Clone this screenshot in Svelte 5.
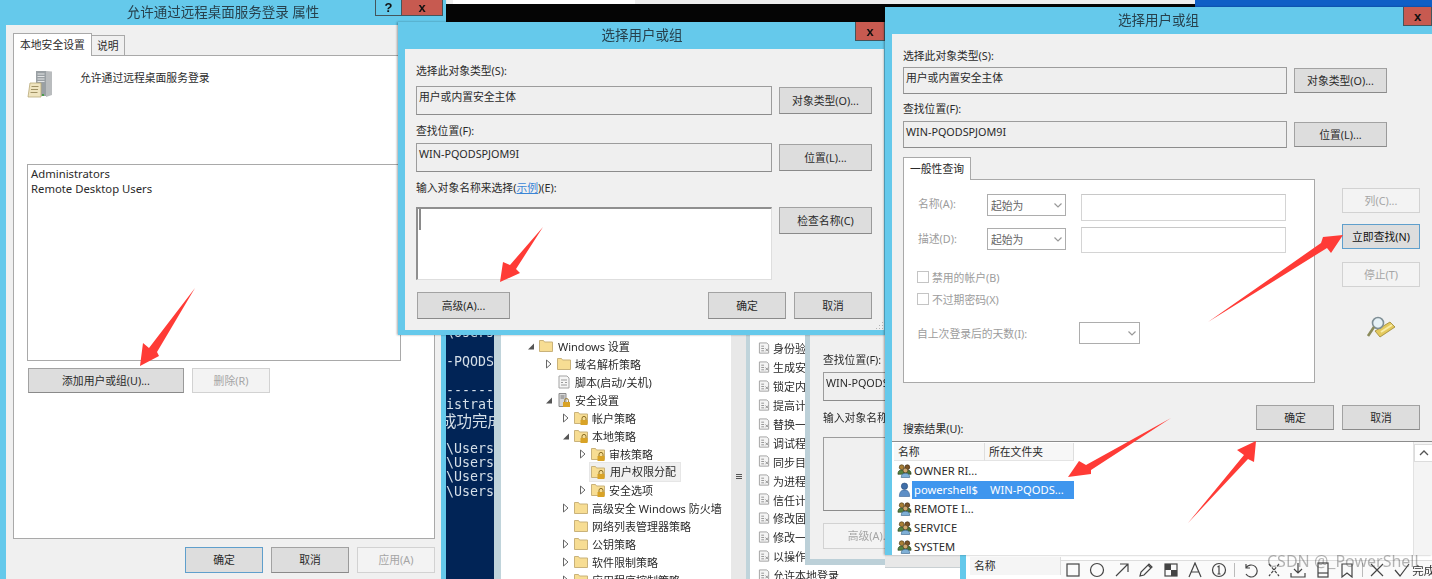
<script>
  const tree = [
    { level: 0, arrow: 'open', icon: 'folder', text: 'Windows 设置' },
    { level: 1, arrow: 'closed', icon: 'folder', text: '域名解析策略' },
    { level: 1, icon: 'script', text: '脚本(启动/关机)' },
    { level: 1, arrow: 'open', icon: 'server', text: '安全设置' },
    { level: 2, arrow: 'closed', icon: 'lock', text: '帐户策略' },
    { level: 2, arrow: 'open', icon: 'lock', text: '本地策略' },
    { level: 3, arrow: 'closed', icon: 'lock', text: '审核策略' },
    { level: 3, icon: 'lock', text: '用户权限分配', selected: true },
    { level: 3, arrow: 'closed', icon: 'lock', text: '安全选项' },
    { level: 2, arrow: 'closed', icon: 'folder', text: '高级安全 Windows 防火墙' },
    { level: 2, icon: 'folder', text: '网络列表管理器策略' },
    { level: 2, arrow: 'closed', icon: 'folder', text: '公钥策略' },
    { level: 2, arrow: 'closed', icon: 'folder', text: '软件限制策略' },
    { level: 2, arrow: 'closed', icon: 'folder', text: '应用程序控制策略' }
  ];

  const policies = [
    '身份验证后模拟客户端', '生成安全审核', '锁定内存页', '提高计划优先级', '替换一个进程级令牌',
    '调试程序', '同步目录服务数据', '为进程调整内存配额', '信任计算机和用户帐户',
    '修改固件环境值', '修改一个对象标签', '以操作系统方式执行', '允许本地登录'
  ];

  const results = [
    { name: 'OWNER RI...', folder: '', icon: 'group' },
    { name: 'powershell$', folder: 'WIN-PQODS...', icon: 'user', selected: true },
    { name: 'REMOTE I...', folder: '', icon: 'group' },
    { name: 'SERVICE', folder: '', icon: 'group' },
    { name: 'SYSTEM', folder: '', icon: 'group' }
  ];

  const consoleLines = [
    '\\Users', '', '-PQODS', '', '--------', 'istrat', '成功完成', '',
    '\\Users', '\\Users', '\\Users', '\\Users'
  ];

  const arrows = [
    '195,288 157,352 159,356 140,366 143,343 149,348',
    '543,227 516,269 520,273 500,282 503,262 510,265',
    '1208,322 1321,243 1323,237 1343,235 1331,253 1327,248',
    '1171,418 1086,465 1079,461 1068,477 1091,474 1091,470',
    '1188,523 1244,455 1237,450 1256,441 1254,462 1248,459'
  ];
</script>

{#snippet pick(type, locName)}
  <div class="plabel">选择此对象类型(S):</div>
  <div class="prow">
    <div class="field">{type}</div>
    <button class="btn side">对象类型(O)...</button>
  </div>
  <div class="plabel second">查找位置(F):</div>
  <div class="prow">
    <div class="field">{locName}</div>
    <button class="btn side">位置(L)...</button>
  </div>
{/snippet}

{#snippet chevron()}
  <svg viewBox="0 0 8 5" width="8" height="5"><path d="M.5.5l3.500 3.500 3.500-3.500" fill="none" stroke="#999" stroke-width="1.200"/></svg>
{/snippet}

{#snippet treeIcon(kind)}
  {#if kind === 'script'}
    <svg class="ticon" viewBox="0 0 14 14"><path d="M2 1h8l2 2v10H2z" fill="#f6f6f6" stroke="#a3a3a3"/><path d="M4 5h6M4 7.500h2M8 7.500h2M4 10h6" stroke="#9a9a9a"/></svg>
  {:else if kind === 'server'}
    <svg class="ticon" viewBox="0 0 14 14"><path d="M2 0.500h7v13H2z" fill="#d8d8d8" stroke="#8b8b8b"/><path d="M3.500 3h4M3.500 5h4" stroke="#777"/><path d="M6 9h7v5H6z" fill="#d9a326"/><path d="M7.600 9V7.400a1.900 1.900 0 0 1 3.800 0V9" fill="none" stroke="#9a7a2c"/></svg>
  {:else}
    <svg class="ticon" viewBox="0 0 14 14"><path d="M0.500 12.500V1.500h4l1 1.500h8v9.500z" fill="#f7dd93" stroke="#c9b27a"/>
      {#if kind === 'lock'}
        <path d="M6.500 9h7v5h-7z" fill="#d9a326"/><path d="M8 9V7.400a2 2 0 0 1 4 0V9" fill="none" stroke="#8a6d24"/>
      {/if}
    </svg>
  {/if}
{/snippet}

{#snippet userIcon(kind)}
  <svg class="uicon" viewBox="0 0 16 16">
    {#if kind === 'group'}
      <circle cx="5" cy="4.500" r="2.600" fill="#a97f35" stroke="#4c3c1a" stroke-width=".7"/>
      <path d="M1 12c0-3.500 1.500-4.500 4-4.500S9 8.500 9 12z" fill="#55803f" stroke="#2c4620" stroke-width=".7"/>
      <circle cx="11" cy="4.500" r="2.600" fill="#7a5226" stroke="#3c2a12" stroke-width=".7"/>
      <path d="M7 12c0-3.500 1.500-4.500 4-4.500s4 1 4 4.500z" fill="#4a7236" stroke="#263c1a" stroke-width=".7"/>
      <circle cx="9" cy="8" r="2.500" fill="#d2a970" stroke="#5c4426" stroke-width=".7"/>
      <path d="M4.500 15.500c0-3.500 1.800-4.500 4.500-4.500s4.500 1 4.500 4.500z" fill="#7fb0d6" stroke="#3f6a90" stroke-width=".7"/>
    {:else}
      <circle cx="8" cy="4.500" r="3.400" fill="#3f6ea8" stroke="#274a78" stroke-width=".6"/>
      <path d="M2.500 15.500c0-5 2.200-7 5.500-7s5.500 2 5.500 7z" fill="#5e8fc6" stroke="#2f5a8c" stroke-width=".6"/>
    {/if}
  </svg>
{/snippet}

<div class="desktop">
  <div class="top-strip">
    <div class="strip-light"></div>
    <div class="strip-black"></div>
  </div>
  <div class="wallpaper"></div>

  <div class="back-app">
    <div class="terminal">
      {#each consoleLines as line}
        <div class="cline" class:cjk={line.startsWith('成')}>{line}</div>
      {/each}
    </div>
    <div class="gutter"></div>
    <div class="tree">
      {#each tree as node}
        <div class="tnode lvl{node.level}">
          <span class="twist">
            {#if node.arrow === 'closed'}
              <svg viewBox="0 0 8 10" width="8" height="10"><path d="M1.500 1l4.500 4-4.500 4z" fill="#fff" stroke="#666"/></svg>
            {:else if node.arrow === 'open'}
              <svg viewBox="0 0 8 10" width="8" height="10"><path d="M7 2.500v6H1z" fill="#555"/></svg>
            {/if}
          </span>
          {@render treeIcon(node.icon)}
          <span class="tlabel" class:selected={node.selected}>{node.text}</span>
        </div>
      {/each}
    </div>
    <div class="splitter"><span></span><span></span><span></span></div>
    <div class="gutter thin"></div>
    <div class="policies">
      {#each policies as p}
        <div class="policy">
          <svg class="picon" viewBox="0 0 14 14"><path d="M1.500 1h8l2 2v9h-10z" fill="#f4f4f4" stroke="#a0a0a0"/><path d="M3.500 4.500h3M3.500 7h3M3.500 9.500h3M8 7l3 3M11 7l-3 3" stroke="#8f8f8f"/></svg>
          <span>{p}</span>
        </div>
      {/each}
    </div>
  </div>

  <div class="behind-win">
    <div class="behind-body">
      <div class="plabel">查找位置(F):</div>
      <div class="field bf">WIN-PQODSPJOM9I</div>
      <div class="plabel b2">输入对象名称来选择(示例)(E):</div>
      <div class="field bt"></div>
      <button class="btn off badv">高级(A)...</button>
    </div>
  </div>

  <!-- 属性窗口 -->
  <div class="win w1">
    <div class="titlebar">
      <span class="title">允许通过远程桌面服务登录 属性</span>
      <div class="caps">
        <span class="cap help">?</span>
        <span class="cap close wide">x</span>
      </div>
    </div>
    <div class="body w1-body">
      <div class="tabs">
        <div class="tab active">本地安全设置</div>
        <div class="tab">说明</div>
      </div>
      <div class="panel w1-panel">
        <div class="w1-head">
          <svg class="server" viewBox="0 0 26 28">
            <path d="M9 1h10v25H9z" fill="#9aa0a4"/>
            <path d="M10.500 4h7M10.500 6.500h7M10.500 9h7M10.500 11.500h7" stroke="#e3e5e6" stroke-width="1.200"/>
            <path d="M19 1l6 .5V25l-6 2z" fill="#b9bcbe"/>
            <path d="M3 13h11v14H1z" fill="#efe4bf" stroke="#b9aa7a" stroke-width=".8"/>
            <path d="M4.500 16.500h7M4 19.500h7M3.500 22.500h7" stroke="#a09265"/>
            <rect x="15" y="24" width="2" height="2" fill="#4a9b4a"/>
          </svg>
          <span>允许通过远程桌面服务登录</span>
        </div>
        <div class="members">
          <div>Administrators</div>
          <div>Remote Desktop Users</div>
        </div>
        <div class="member-actions">
          <button class="btn add">添加用户或组(U)...</button>
          <button class="btn off w78">删除(R)</button>
        </div>
      </div>
      <div class="w1-foot">
        <button class="btn w78 default">确定</button>
        <button class="btn w78">取消</button>
        <button class="btn off w78">应用(A)</button>
      </div>
    </div>
  </div>

  <!-- 选择用户或组 -->
  <div class="win w2">
    <div class="titlebar">
      <span class="title">选择用户或组</span>
      <div class="caps"><span class="cap close">x</span></div>
    </div>
    <div class="body w2-body">
      <div class="pick">
        {@render pick('用户或内置安全主体', 'WIN-PQODSPJOM9I')}
      </div>
      <div class="plabel third">输入对象名称来选择(<span class="link">示例</span>)(E):</div>
      <div class="entry-row">
        <div class="entry"><i></i></div>
        <button class="btn side">检查名称(C)</button>
      </div>
      <div class="w2-foot">
        <button class="btn side">高级(A)...</button>
        <div class="spacer"></div>
        <button class="btn w78">确定</button>
        <button class="btn w78">取消</button>
      </div>
      <svg class="grip" viewBox="0 0 10 10"><path d="M8 2h1v1H8zM5 5h1v1H5zM8 5h1v1H8zM2 8h1v1H2zM5 8h1v1H5zM8 8h1v1H8z" fill="#b5b5b5"/></svg>
    </div>
  </div>

  <div class="under-bar"></div>
  <div class="win-under">
    <div class="under-head">名称</div>
  </div>

  <!-- 选择用户或组(高级) -->
  <div class="win w3">
    <div class="titlebar">
      <span class="title">选择用户或组</span>
      <div class="caps"><span class="cap close">x</span></div>
    </div>
    <div class="body w3-body">
      <div class="pick tight">
        {@render pick('用户或内置安全主体', 'WIN-PQODSPJOM9I')}
      </div>
      <div class="query">
        <div class="query-left">
          <div class="tabs q-tabs"><div class="tab active q-tab">一般性查询</div></div>
          <div class="panel q-panel">
            <div class="q-grid">
              <span class="dim">名称(A):</span>
              <div class="select"><span>起始为</span>{@render chevron()}</div>
              <span></span>
              <div class="input"></div>
              <span class="dim low">描述(D):</span>
              <div class="select one"><span>起始为</span>{@render chevron()}</div>
              <span></span>
              <div class="input"></div>
            </div>
            <div class="checks">
              <div class="check"><i></i><span>禁用的帐户(B)</span></div>
              <div class="check"><i></i><span>不过期密码(X)</span></div>
            </div>
            <div class="days">
              <span class="dim">自上次登录后的天数(I):</span>
              <div class="select small"><span></span>{@render chevron()}</div>
            </div>
          </div>
        </div>
        <div class="query-right">
          <button class="btn off w78">列(C)...</button>
          <button class="btn w78 default now">立即查找(N)</button>
          <button class="btn off w78 stop">停止(T)</button>
          <svg class="finder" viewBox="0 0 30 22">
            <path d="M9 15l15-9 5 5-15 10z" fill="#e4c95e" stroke="#9c8634" stroke-width=".8"/>
            <path d="M15 16l11-7" stroke="#f8eca8" stroke-width="2"/>
            <circle cx="12" cy="7" r="5.500" fill="#e6f1f6" stroke="#7f8f96" stroke-width="1.600"/>
            <path d="M8 11L2 20" stroke="#8a8a5a" stroke-width="2.600"/>
          </svg>
        </div>
      </div>
      <div class="w3-foot">
        <span class="result-label">搜索结果(U):</span>
        <div class="spacer"></div>
        <button class="btn w78">确定</button>
        <button class="btn w78">取消</button>
      </div>
      <div class="results">
        <div class="results-main">
          <div class="rhead"><span class="c1">名称</span><span class="c2">所在文件夹</span></div>
          {#each results as r}
            <div class="rrow">
              {@render userIcon(r.icon)}
              <div class="rcells" class:selected={r.selected}>
                <span class="rname">{r.name}</span>
                {#if r.folder}<span class="rfolder">{r.folder}</span>{/if}
              </div>
            </div>
          {/each}
        </div>
        <div class="scroll">
          <div class="sbtn"><svg viewBox="0 0 10 6" width="10" height="6"><path d="M1 5l4-4 4 4" fill="none" stroke="#555" stroke-width="1.300"/></svg></div>
        </div>
      </div>
    </div>
  </div>

  <div class="toolbar">
    <svg viewBox="0 0 16 16"><rect x="2" y="2" width="12" height="12"/></svg>
    <svg viewBox="0 0 16 16"><circle cx="8" cy="8" r="6.500"/></svg>
    <svg viewBox="0 0 16 16"><path d="M2 14L14 2M6 2h8v8"/></svg>
    <svg viewBox="0 0 16 16"><path d="M2 14l1-4 8-8 3 3-8 8zM10 3l3 3"/></svg>
    <svg viewBox="0 0 16 16"><rect x="2" y="2" width="12" height="12"/><path class="solid" d="M2 2h6v6H2zM8 8h6v6H8z"/></svg>
    <svg viewBox="0 0 16 16"><path d="M2 15L8 1l6 14M4.500 10h7"/></svg>
    <svg viewBox="0 0 16 16"><circle cx="8" cy="8" r="6.500"/><path d="M6.500 5L8 4v8M6.500 12h3"/></svg>
    <i class="tsep"></i>
    <svg viewBox="0 0 16 16"><path d="M4 2v4h4M4 6a6 6 0 1 1 0 6"/></svg>
    <svg viewBox="0 0 16 16"><path d="M3 2l10 12M13 2L3 14" stroke-dasharray="3 1.500"/></svg>
    <svg viewBox="0 0 16 16"><path d="M8 1v10M4 7l4 4 4-4M1 11v4h14v-4"/></svg>
    <svg viewBox="0 0 16 16"><rect x="3" y="1" width="10" height="14"/><path d="M3 11h10"/></svg>
    <svg viewBox="0 0 16 16"><path d="M3 2h10v13l-5-4-5 4z"/></svg>
    <i class="tsep"></i>
    <svg viewBox="0 0 16 16"><path d="M2 2l12 12M14 2L2 14"/></svg>
    <svg viewBox="0 0 16 16"><path d="M1 8l5 6L15 2"/></svg>
    <span class="done">完成</span>
  </div>
  <span class="watermark">CSDN @_PowerShell</span>

  <svg class="arrows" viewBox="0 0 1432 579">
    {#each arrows as a}
      <polygon points={a} />
    {/each}
  </svg>
</div>

<style>
  :global(body) {
    margin: 0;
    background: #fff;
  }

  .desktop {
    position: relative;
    width: 1432px;
    height: 579px;
    overflow: hidden;
    font-family: "Noto Sans", "Noto Sans CJK SC", sans-serif;
    font-size: 10.8px;
    color: #2a2a2a;
    filter: blur(0.5px);
  }

  .top-strip {
    position: absolute;
    left: 446px;
    top: 0;
    width: 750px;
  }
  .strip-light {
    height: 4px;
    background: linear-gradient(to right, #eee 7px, #fff 7px, #fff 189px, #eee 189px);
  }
  .strip-black {
    height: 20px;
    background: #050505;
  }
  .wallpaper {
    position: absolute;
    left: 1195px;
    top: 0;
    width: 237px;
    height: 8px;
    background: #0f5fc6;
  }

  /* window chrome */
  .win {
    position: absolute;
    box-sizing: border-box;
    display: flex;
    flex-direction: column;
    background: #65c9eb;
    box-shadow: -1px 0 2px rgba(0, 0, 0, 0.35);
  }
  .titlebar {
    position: relative;
    flex: none;
    display: flex;
    justify-content: center;
    align-items: center;
  }
  .title {
    margin-bottom: 4px;
    font-size: 13.5px;
    color: #27414d;
  }
  .caps {
    position: absolute;
    top: 0;
    right: 0;
    display: flex;
  }
  .cap {
    box-sizing: border-box;
    display: flex;
    align-items: center;
    justify-content: center;
    height: 19px;
    width: 30px;
    border: 1px solid #44555c;
    border-top: none;
    font: bold 13px/1 "Liberation Sans", sans-serif;
    color: #111;
  }
  .close {
    background: #c75a50;
  }
  .help {
    width: 26px;
    height: 16px;
    border-right: none;
  }
  .cap.wide {
    width: 42px;
    height: 16px;
  }
  .body {
    flex: 1;
    min-height: 0;
    background: #f0f0f0;
    box-sizing: border-box;
  }

  /* buttons */
  .btn {
    box-sizing: border-box;
    display: flex;
    align-items: center;
    justify-content: center;
    height: 26px;
    padding: 0 0 2px;
    flex: none;
    border: 1px solid #a2a2a2;
    border-bottom-color: #8a8a8a;
    border-right-color: #9a9a9a;
    border-radius: 0;
    background: #dddddd;
    font: inherit;
    color: #2a2a2a;
  }
  .btn.off {
    background: #f3f3f3;
    border-color: #d2d2d2;
    color: #a5a5a5;
  }
  .btn.default {
    border-color: #5f9fcc;
  }
  .w78 {
    width: 78px;
  }
  .side {
    width: 93px;
  }
  .spacer {
    flex: 1;
  }

  /* tabs and panels */
  .tabs {
    display: flex;
    height: 22px;
    align-items: flex-start;
  }
  .tab {
    box-sizing: border-box;
    height: 20px;
    margin-top: 2px;
    padding: 0 5px;
    line-height: 19px;
    background: #f0f0f0;
    border: 1px solid #a9a9a9;
    border-bottom: none;
    border-left: none;
  }
  .tab.active {
    position: relative;
    z-index: 1;
    height: 23px;
    margin-top: 0;
    padding: 0 6px;
    width: 79px;
    line-height: 22px;
    background: #fff;
    border-left: 1px solid #a9a9a9;
  }
  .panel {
    box-sizing: border-box;
    background: #fff;
    border: 1px solid #a9a9a9;
  }

  /* property window */
  .w1 {
    left: 0;
    top: 0;
    width: 446px;
    height: 600px;
    padding: 0 5px 0 6px;
  }
  .w1 .titlebar {
    height: 25px;
    margin: 0 -5px 0 -6px;
  }
  .w1 .caps {
    right: 3px;
  }
  .w1-body {
    padding: 8px 0 0 7px;
  }
  .w1-panel {
    width: 422px;
    height: 484px;
    padding-left: 13px;
  }
  .w1-head {
    display: flex;
    align-items: flex-start;
    height: 108px;
    padding-top: 14px;
    box-sizing: border-box;
  }
  .w1-head span {
    margin-left: 27px;
    line-height: 16px;
  }
  .server {
    width: 26px;
    height: 28px;
  }
  .members {
    box-sizing: border-box;
    width: 374px;
    height: 197px;
    padding: 1px 3px;
    border: 1px solid #a9a9a9;
    font-size: 11.3px;
    line-height: 15px;
  }
  .member-actions {
    display: flex;
    gap: 8px;
    margin: 7px 0 0 1px;
  }
  .add {
    width: 156px;
    height: 25px;
  }
  .member-actions .off {
    height: 25px;
  }
  .w1-foot {
    display: flex;
    justify-content: flex-end;
    gap: 8px;
    width: 422px;
    margin-top: 8px;
  }

  /* shared pick rows */
  .plabel {
    height: 16px;
    line-height: 16px;
    white-space: nowrap;
  }
  .prow {
    display: flex;
    align-items: center;
    gap: 7px;
    height: 29px;
    margin-top: 7px;
  }
  .plabel.second {
    margin-top: 8px;
  }
  .plabel.second + .prow {
    margin-top: 4px;
  }
  .field {
    flex: 1;
    box-sizing: border-box;
    height: 100%;
    padding: 0 2px;
    line-height: 19px;
    border: 1px solid #9c9c9c;
    border-bottom-color: #8c8c8c;
    background: #efefef;
    white-space: nowrap;
  }
  .prow .btn {
    height: 27px;
  }

  /* dialog 2 */
  .w2 {
    left: 398px;
    top: 22px;
    width: 488px;
    height: 313px;
    padding: 0 2px 5px 7px;
  }
  .w2 .titlebar {
    height: 27px;
    margin-left: -7px;
    margin-right: -2px;
  }
  .w2 .caps {
    right: 1px;
  }
  .w2-body {
    position: relative;
    padding: 14px 0 0 11px;
  }
  .pick {
    width: 456px;
  }
  .third {
    margin-top: 8px;
  }
  .link {
    color: #3a85d6;
    text-decoration: underline;
  }
  .entry-row {
    display: flex;
    align-items: flex-start;
    gap: 7px;
    width: 456px;
    margin-top: 11px;
  }
  .entry {
    position: relative;
    box-sizing: border-box;
    flex: 1;
    height: 73px;
    background: #fff;
    border: 1px solid #dedede;
    border-top: 2px solid #8f8f8f;
    border-left: 2px solid #8f8f8f;
  }
  .entry i {
    display: block;
    width: 2px;
    height: 21px;
    margin-left: 1px;
    background: #8a8a8a;
  }
  .entry-row .btn {
    height: 27px;
  }
  .w2-foot {
    display: flex;
    gap: 8px;
    width: 455px;
    margin: 12px 0 0 1px;
  }
  .w2-foot .btn {
    height: 27px;
  }
  .grip {
    position: absolute;
    right: 0;
    bottom: 0;
    width: 10px;
    height: 10px;
  }

  /* terminal + mmc behind */
  .back-app {
    position: absolute;
    left: 446px;
    top: 335px;
    width: 440px;
    height: 244px;
    display: flex;
    overflow: hidden;
  }
  .terminal {
    flex: none;
    width: 48px;
    margin-top: -9px;
    overflow: hidden;
    background: #012456;
    color: #d5dfe8;
    font-family: "DejaVu Sans Mono", monospace;
    font-size: 13.3px;
  }
  .cline {
    height: 14.45px;
    line-height: 14.45px;
    white-space: pre;
  }
  .cline.cjk {
    margin-left: -5px;
    font-family: "Noto Sans CJK SC", sans-serif;
    font-size: 15.5px;
  }
  .gutter {
    flex: none;
    width: 7px;
    background: #c0d4db;
  }
  .gutter.thin {
    width: 4px;
  }
  .tree {
    flex: none;
    width: 230px;
    box-sizing: border-box;
    padding-top: 2px;
    background: #fff;
  }
  .tnode {
    display: flex;
    align-items: center;
    height: 18px;
    white-space: nowrap;
  }
  .lvl0 { padding-left: 25px; }
  .lvl1 { padding-left: 43px; }
  .lvl2 { padding-left: 60px; }
  .lvl3 { padding-left: 77px; }
  .twist {
    flex: none;
    display: flex;
    width: 9px;
    margin-right: 4px;
    justify-content: center;
  }
  .ticon {
    position: relative;
    z-index: 1;
    flex: none;
    width: 14px;
    height: 14px;
  }
  .tlabel {
    padding: 0 4px;
    line-height: 17px;
    font-size: 11px;
  }
  .lvl0 .tlabel { margin-left: 1px; }
  .tlabel.selected {
    box-sizing: border-box;
    height: 20px;
    line-height: 18px;
    background: #f0f0f0;
    border: 1px solid #e6e6e6;
    margin-left: -16px;
    padding-left: 20px;
  }
  .splitter {
    flex: none;
    width: 15px;
    background: #e8e8e8;
    display: flex;
    flex-direction: column;
    align-items: center;
    justify-content: center;
    gap: 1px;
    box-sizing: border-box;
    padding-top: 38px;
  }
  .splitter span {
    width: 6px;
    height: 1px;
    background: #555;
  }
  .policies {
    flex: 1;
    background: #fff;
    padding-top: 4px;
    box-sizing: border-box;
  }
  .policy {
    display: flex;
    align-items: center;
    gap: 2px;
    height: 18.9px;
    padding-left: 8px;
    white-space: nowrap;
    font-size: 11px;
  }
  .picon {
    flex: none;
    width: 13px;
    height: 13px;
  }

  .behind-win {
    position: absolute;
    left: 805px;
    top: 335px;
    width: 81px;
    height: 230px;
    box-sizing: border-box;
    background: #bcd0d8;
    padding: 0 0 6px 5px;
  }
  .behind-body {
    height: 100%;
    box-sizing: border-box;
    overflow: hidden;
    background: #f0f0f0;
    padding: 17px 0 0 13px;
    width: 76px;
  }
  .field.bf {
    flex: none;
    width: 200px;
    height: 29px;
    margin-top: 4px;
  }
  .plabel.b2 {
    margin-top: 9px;
  }
  .field.bt {
    flex: none;
    width: 200px;
    height: 74px;
    margin-top: 11px;
    background: #f0f0f0;
    border-right: none;
  }
  .badv {
    width: 93px;
    height: 26px;
    margin-top: 12px;
  }

  /* dialog 3 */
  .w3 {
    left: 885px;
    top: 7px;
    width: 547px;
    height: 548px;
    padding: 0 0 0 7px;
  }
  .w3 .titlebar {
    height: 27px;
    margin-left: -7px;
  }
  .w3 .caps .cap {
    width: 29px;
  }
  .w3-body {
    padding: 14px 0 0 11px;
    display: flex;
    flex-direction: column;
    overflow: hidden;
  }
  .pick.tight {
    width: 484px;
  }
  .pick.tight :global(.prow) {
    height: 27px;
    margin-top: 3px;
  }
  .pick.tight .plabel.second {
    margin-top: 7px;
  }
  .pick.tight :global(.plabel.second + .prow) {
    margin-top: 4px;
  }
  .pick.tight :global(.prow .btn) {
    height: 25px;
  }
  .query {
    display: flex;
    gap: 27px;
    margin-top: 9px;
  }
  .query-left {
    width: 412px;
  }
  .q-tabs {
    height: 22px;
  }
  .q-tab.active {
    width: 68px;
    padding: 0 6px;
    white-space: nowrap;
  }
  .q-panel {
    height: 204px;
    padding: 14px 0 0 14px;
  }
  .q-grid {
    display: grid;
    grid-template-columns: 69px 79px 15px 205px;
    grid-template-rows: 27px 26px;
    row-gap: 6px;
  }
  .dim {
    color: #9c9c9c;
    line-height: 19px;
  }
  .dim.low {
    line-height: 24px;
  }
  .select {
    box-sizing: border-box;
    display: flex;
    align-items: center;
    justify-content: space-between;
    height: 22px;
    padding: 0 3px 0 3px;
    border: 1px solid #adadad;
    background: #fff;
    color: #666;
  }
  .select.one {
    margin-top: 1px;
  }
  .input {
    box-sizing: border-box;
    border: 1px solid #d4d4d4;
    border-top-color: #c8c8c8;
  }
  .checks {
    margin: 13px 0 0 -1px;
  }
  .check {
    display: flex;
    align-items: center;
    height: 22px;
    gap: 3px;
    color: #9c9c9c;
  }
  .check i {
    box-sizing: border-box;
    width: 12px;
    height: 12px;
    border: 1px solid #c4c4c4;
  }
  .days {
    display: flex;
    justify-content: space-between;
    margin: 12px 0 0 -1px;
    width: 223px;
    align-items: center;
  }
  .select.small {
    width: 61px;
  }
  .query-right {
    display: flex;
    flex-direction: column;
    padding-top: 31px;
  }
  .query-right .btn {
    height: 25px;
  }
  .now {
    margin-top: 11px;
    color: #111;
  }
  .stop {
    margin-top: 13px;
  }
  .finder {
    width: 30px;
    height: 22px;
    margin: 29px 0 0 24px;
  }
  .w3-foot {
    display: flex;
    gap: 8px;
    width: 517px;
    height: 36px;
    margin-top: 22px;
  }
  .w3-foot .btn {
    height: 25px;
  }
  .result-label {
    align-self: flex-end;
    line-height: 16px;
    padding-bottom: 4px;
  }
  .results {
    flex: 1;
    display: flex;
    margin-left: -11px;
    background: #fff;
    border-top: 1px solid #8c8c8c;
    min-height: 0;
  }
  .results-main {
    flex: 1;
    padding: 1px 0 0 2px;
  }
  .rhead {
    display: flex;
    height: 18px;
    line-height: 17px;
  }
  .c1, .c2 {
    box-sizing: border-box;
    padding-left: 4px;
    background: #f7f7f7;
    border-right: 1px solid #dedede;
    border-bottom: 1px solid #e4e4e4;
  }
  .c1 { width: 91px; }
  .c2 { width: 89px; }
  .rrow {
    display: flex;
    align-items: center;
    height: 19px;
    padding-left: 3px;
  }
  .uicon {
    flex: none;
    width: 15px;
    height: 15px;
  }
  .rcells {
    display: flex;
    width: 162px;
    height: 18px;
    align-items: center;
    padding-left: 2px;
    box-sizing: border-box;
    white-space: nowrap;
    font-size: 11.2px;
  }
  .rcells.selected {
    background: #3f96ee;
    color: #fff;
  }
  .rname {
    width: 76px;
  }
  .scroll {
    flex: none;
    width: 18px;
    background: #f4f4f4;
    border-left: 1px solid #e2e2e2;
    padding-top: 2px;
  }
  .sbtn {
    display: flex;
    align-items: center;
    justify-content: center;
    height: 16px;
    background: #fff;
    border: 1px solid #dcdcdc;
    border-right: none;
  }

  /* bottom right */
  .under-bar {
    position: absolute;
    left: 885px;
    top: 555px;
    width: 75px;
    height: 24px;
    background: linear-gradient(to bottom, #e8e8e8 12px, #c9d0d3 12px, #c9d0d3 13px, #fff 13px);
  }
  .win-under {
    position: absolute;
    left: 960px;
    top: 555px;
    width: 472px;
    height: 24px;
    box-sizing: border-box;
    background: #fff;
    border-left: 6px solid #65c9eb;
    padding: 2px 0 0 4px;
  }
  .under-head {
    width: 86px;
    height: 18px;
    padding-left: 4px;
    line-height: 18px;
    background: #f5f5f5;
    border-right: 1px solid #ddd;
  }
  .toolbar {
    position: absolute;
    left: 1061px;
    top: 560px;
    right: 0;
    height: 19px;
    display: flex;
    align-items: center;
    gap: 8.4px;
    padding-left: 4px;
    background: rgba(250, 250, 250, 0.96);
    border-top: 1px solid #ddd;
    box-sizing: border-box;
  }
  .toolbar svg {
    flex: none;
    width: 16px;
    height: 16px;
    fill: none;
    stroke: #444;
    stroke-width: 1.200;
  }
  .toolbar .solid {
    fill: #444;
    stroke: none;
  }
  .tsep {
    flex: none;
    width: 1px;
    height: 14px;
    margin: 0 -2px 0 -1.500px;
    background: #bbb;
  }
  .done {
    margin-left: -6px;
    font-size: 11.5px;
    white-space: nowrap;
    color: #333;
  }
  .watermark {
    position: absolute;
    left: 1267px;
    top: 549px;
    font-size: 16px;
    line-height: 24px;
    color: rgba(70, 70, 70, 0.4);
    white-space: nowrap;
  }
  .arrows {
    position: absolute;
    left: 0;
    top: 0;
    width: 1432px;
    height: 579px;
    pointer-events: none;
    fill: #ff3b36;
  }
</style>
